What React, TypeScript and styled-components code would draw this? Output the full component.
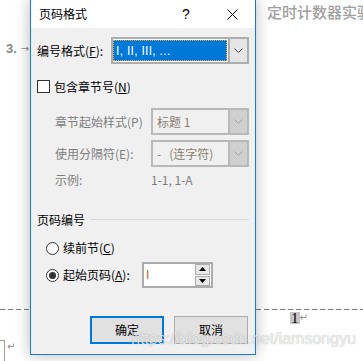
import React from 'react';
import styled, { createGlobalStyle } from 'styled-components';

const UI = `"Noto Sans CJK SC", "Liberation Sans", sans-serif`;

const GlobalStyle = createGlobalStyle`
  html, body { margin: 0; padding: 0; background: #fff; }
  body { width: 363px; height: 361px; overflow: hidden; font-family: ${UI}; }
`;

const Page = styled.div`
  position: relative;
  width: 363px;
  height: 361px;
  overflow: hidden;
  background: #fff;
`;

/* ---------- document behind the dialog ---------- */
const Doc = styled.div`
  display: flex;
  flex-direction: column;
  height: 100%;
`;

const HeaderText = styled.div`
  height: 24px;
  padding-left: 267px;
  white-space: nowrap;
  font: 500 15px/24px ${UI};
  color: #a0a0a0;
`;

const ListLine = styled.div`
  margin-top: 18px;
  height: 14px;
  display: flex;
  align-items: center;
  padding-left: 6px;
  gap: 4px;
  color: #8a8a8a;
`;

const ListNum = styled.span`
  font: bold 13px/14px "Liberation Sans", sans-serif;
`;

const Arrow = styled.span`
  font: 10px/14px "DejaVu Sans", sans-serif;
`;

const DashedRule = styled.div`
  margin-top: 253px;
  height: 1px;
  flex: none;
  background: repeating-linear-gradient(to right, #7a7a7a 0 5px, transparent 5px 8px);
`;

const PageNumRow = styled.div`
  margin-top: 2px;
  height: 12px;
  padding-left: 290px;
  display: flex;
  align-items: center;
`;

const PageNum = styled.span`
  background: #c6c6c6;
  font: 15px/12px "Liberation Serif", serif;
  height: 12px;
  color: #000;
  padding: 0 1px;
`;

const ReturnMark = styled.span`
  font: 10px/12px "DejaVu Sans", sans-serif;
  color: #8a8a8a;
`;

const CornerRow = styled.div`
  margin-top: 16px;
  display: flex;
  align-items: flex-start;
  gap: 2px;
`;

const Corner = styled.div`
  width: 4px;
  height: 21px;
  border-top: 1px solid #a0a0a0;
  border-right: 1px solid #a0a0a0;
`;

const CornerReturn = styled.span`
  margin-top: 1px;
  font: 10px/12px "DejaVu Sans", sans-serif;
  color: #8a8a8a;
`;

/* ---------- dialog ---------- */
const Dialog = styled.div`
  position: absolute;
  left: 30px;
  top: -1px;
  width: 226px;
  height: 356px;
  box-sizing: border-box;
  border: 1px solid #1c7ad2;
  background: #f0f0f0;
  box-shadow: 0 0 14px rgba(0, 0, 0, 0.28);
  display: flex;
  flex-direction: column;
  font: 12px/14px ${UI};
  color: #000;
`;

const TitleBar = styled.div`
  height: 28px;
  flex: none;
  background: #fff;
  display: flex;
  align-items: center;
  padding-left: 8px;
`;

const Title = styled.div`
  flex: 1;
  font-size: 12px;
`;

const TitleButton = styled.div`
  width: 46px;
  height: 28px;
  display: flex;
  align-items: center;
  justify-content: center;
  font: 14px/28px "Liberation Sans", sans-serif;
`;

const Body = styled.div`
  flex: 1;
  display: flex;
  flex-direction: column;
  padding: 9px 6px 0 6px;
`;

const Row = styled.div<{ $top?: number; $h?: number; $indent?: number }>`
  display: flex;
  align-items: center;
  margin-top: ${(p) => p.$top ?? 0}px;
  height: ${(p) => p.$h ?? 14}px;
  padding-left: ${(p) => p.$indent ?? 0}px;
`;

const Label = styled.span<{ $w?: number; $disabled?: boolean }>`
  width: ${(p) => (p.$w ? `${p.$w}px` : 'auto')};
  flex: none;
  white-space: nowrap;
  color: ${(p) => (p.$disabled ? '#7d7d7d' : '#000')};
`;

const Combo = styled.div<{ $w: number; $disabled?: boolean }>`
  width: ${(p) => p.$w}px;
  height: 27px;
  box-sizing: border-box;
  border: 2px solid ${(p) => (p.$disabled ? '#b9b9b9' : '#adadad')};
  background: ${(p) => (p.$disabled ? '#f0f0f0' : '#fff')};
  display: flex;
  align-items: stretch;
`;

const ComboValue = styled.div<{ $disabled?: boolean }>`
  flex: 1;
  display: flex;
  align-items: center;
  padding-left: 4px;
  color: ${(p) => (p.$disabled ? '#8a8070' : '#000')};
  white-space: nowrap;
`;

const SelectedValue = styled.div`
  flex: 1;
  margin: 1px 1px 1px 0;
  box-sizing: border-box;
  background: #0078d7;
  border: 1px dotted #f5a030;
  color: #fff;
  display: flex;
  align-items: center;
  padding-left: 2px;
  font: 12px/14px "Liberation Sans", sans-serif;
  letter-spacing: 0.3px;
`;

const DropButton = styled.div<{ $disabled?: boolean }>`
  width: 17px;
  flex: none;
  border-left: 2px solid ${(p) => (p.$disabled ? '#b9b9b9' : '#adadad')};
  background: ${(p) => (p.$disabled ? '#cfcfcf' : '#e5e5e5')};
  display: flex;
  align-items: center;
  justify-content: center;
`;

const CheckBox = styled.div`
  width: 13px;
  height: 13px;
  box-sizing: border-box;
  border: 1px solid #333;
  background: #fff;
  flex: none;
  margin-right: 4px;
`;

const Radio = styled.div<{ $checked?: boolean }>`
  width: 13px;
  height: 13px;
  box-sizing: border-box;
  border: 1px solid #333;
  border-radius: 50%;
  background: #fff;
  flex: none;
  margin-right: 4px;
  display: flex;
  align-items: center;
  justify-content: center;
  &::after {
    content: '';
    display: ${(p) => (p.$checked ? 'block' : 'none')};
    width: 7px;
    height: 7px;
    border-radius: 50%;
    background: #333;
  }
`;

const GroupHeader = styled.div`
  margin-top: 26px;
  height: 14px;
  display: flex;
  align-items: center;
  gap: 6px;
`;

const GroupLine = styled.div`
  flex: 1;
  height: 1px;
  margin-top: -2px;
  background: #d9d9d9;
`;

const SpinBox = styled.div`
  width: 71px;
  height: 26px;
  box-sizing: border-box;
  border: 2px solid #adadad;
  background: #fff;
  display: flex;
  align-items: stretch;
`;

const SpinValue = styled.div`
  flex: 1;
  display: flex;
  align-items: center;
  padding-left: 2px;
  font: 12px/14px "Liberation Sans", sans-serif;
  color: #b86a1c;
`;

const SpinButtons = styled.div`
  width: 15px;
  flex: none;
  display: flex;
  flex-direction: column;
  gap: 1px;
  padding: 0 1px 0 0;
`;

const SpinButton = styled.div`
  flex: 1;
  box-sizing: border-box;
  border: 1px solid #adadad;
  background: #e8e8e8;
  display: flex;
  align-items: center;
  justify-content: center;
`;

const ButtonRow = styled.div`
  margin-top: 28px;
  display: flex;
  justify-content: flex-end;
  gap: 10px;
  padding-right: 1px;
`;

const Button = styled.div<{ $default?: boolean }>`
  width: 74px;
  height: 28px;
  box-sizing: border-box;
  border: ${(p) => (p.$default ? '2px solid #0078d7' : '1px solid #adadad')};
  background: #e1e1e1;
  display: flex;
  align-items: center;
  justify-content: center;
  font: 12px/14px ${UI};
  color: #000;
`;

const Watermark = styled.div`
  position: absolute;
  left: 131px;
  top: 331px;
  font: 16px/16px "Liberation Sans", sans-serif;
  color: rgba(255, 255, 255, 0.75);
  text-shadow: 0 0 1px rgba(0, 0, 0, 0.35);
  white-space: nowrap;
  pointer-events: none;
`;

const Chevron = ({ color }: { color: string }) => (
  <svg width="9" height="5" viewBox="0 0 9 5">
    <path d="M0.5 0.5 L4.5 4.5 L8.5 0.5" fill="none" stroke={color} strokeWidth="1" />
  </svg>
);

const CloseIcon = () => (
  <svg width="11" height="11" viewBox="0 0 11 11">
    <path d="M0.5 0.5 L10.5 10.5 M10.5 0.5 L0.5 10.5" stroke="#000" strokeWidth="1" fill="none" />
  </svg>
);

const Tri = ({ up }: { up?: boolean }) => (
  <svg width="7" height="4" viewBox="0 0 7 4">
    <path d={up ? 'M0 4 L3.5 0 L7 4 Z' : 'M0 0 L3.5 4 L7 0 Z'} fill="#000" />
  </svg>
);

export default function App() {
  return (
    <Page>
      <GlobalStyle />
      <Doc>
        <HeaderText>定时计数器实验</HeaderText>
        <ListLine>
          <ListNum>3.</ListNum>
          <Arrow>→</Arrow>
        </ListLine>
        <DashedRule />
        <PageNumRow>
          <PageNum>1</PageNum>
          <ReturnMark>↵</ReturnMark>
        </PageNumRow>
        <CornerRow>
          <Corner />
          <CornerReturn>↵</CornerReturn>
        </CornerRow>
      </Doc>

      <Dialog>
        <TitleBar>
          <Title>页码格式</Title>
          <TitleButton>?</TitleButton>
          <TitleButton>
            <CloseIcon />
          </TitleButton>
        </TitleBar>
        <Body>
          <Row $h={27}>
            <Label $w={74}>
              编号格式(<u>F</u>):
            </Label>
            <Combo $w={138}>
              <SelectedValue>I, II, III, ...</SelectedValue>
              <DropButton>
                <Chevron color="#444" />
              </DropButton>
            </Combo>
          </Row>

          <Row $top={16} $h={13}>
            <CheckBox />
            <Label>
              包含章节号(<u>N</u>)
            </Label>
          </Row>

          <Row $top={15} $h={27} $indent={18}>
            <Label $w={96} $disabled>
              章节起始样式(P)
            </Label>
            <Combo $w={98} $disabled>
              <ComboValue $disabled>标题 1</ComboValue>
              <DropButton $disabled>
                <Chevron color="#a0a0a0" />
              </DropButton>
            </Combo>
          </Row>

          <Row $top={5} $h={27} $indent={18}>
            <Label $w={96} $disabled>
              使用分隔符(E):
            </Label>
            <Combo $w={98} $disabled>
              <ComboValue $disabled>-&nbsp;&nbsp;&nbsp;(连字符)</ComboValue>
              <DropButton $disabled>
                <Chevron color="#a0a0a0" />
              </DropButton>
            </Combo>
          </Row>

          <Row $top={6} $h={14} $indent={18}>
            <Label $w={96} $disabled>
              示例:
            </Label>
            <Label $disabled>1-1, 1-A</Label>
          </Row>

          <GroupHeader>
            <Label>页码编号</Label>
            <GroupLine />
          </GroupHeader>

          <Row $top={14} $h={14} $indent={9}>
            <Radio />
            <Label>
              续前节(<u>C</u>)
            </Label>
          </Row>

          <Row $top={7} $h={26} $indent={9}>
            <Radio $checked />
            <Label $w={79}>
              起始页码(<u>A</u>):
            </Label>
            <SpinBox>
              <SpinValue>I</SpinValue>
              <SpinButtons>
                <SpinButton>
                  <Tri up />
                </SpinButton>
                <SpinButton>
                  <Tri />
                </SpinButton>
              </SpinButtons>
            </SpinBox>
          </Row>

          <ButtonRow>
            <Button $default>确定</Button>
            <Button>取消</Button>
          </ButtonRow>
        </Body>
      </Dialog>

      <Watermark>https://blog.csdn.net/iamsongyu</Watermark>
    </Page>
  );
}
